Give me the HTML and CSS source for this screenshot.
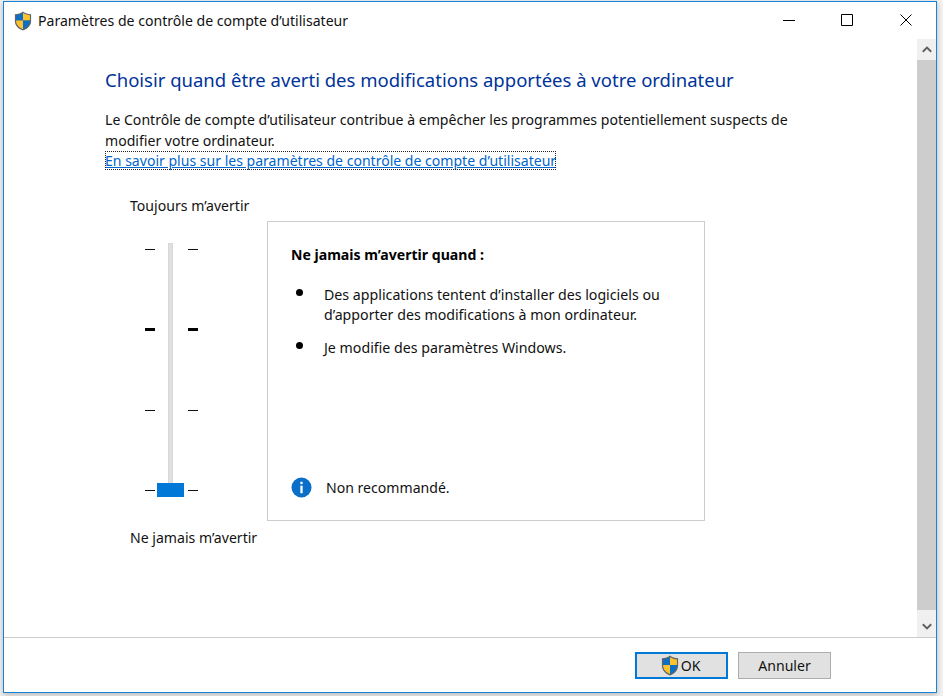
FILE: index.html
```html
<!DOCTYPE html>
<html lang="fr">
<head>
  <meta charset="UTF-8" />
  <title>Paramètres de contrôle de compte d’utilisateur</title>
  <link rel="stylesheet" href="styles.css">
</head>
<body>
  <svg class="defs" width="0" height="0">
    <symbol id="shield" viewBox="0 0 20 22" preserveAspectRatio="none">
      <path d="M10 .5C7.5 2.500 4.500 3.300 1 3.500V11c0 5 3.500 8.500 9 10.500 5.500-2 9-5.500 9-10.500V3.500C15.500 3.300 12.500 2.500 10 .5z" fill="#5f6468"/>
      <path d="M10 2v8.500H2.300V4.600C5.200 4.400 7.800 3.600 10 2z" fill="#0d6fc4"/>
      <path d="M10 2c2.200 1.600 4.800 2.400 7.700 2.600v5.900H10z" fill="#fcc32e"/>
      <path d="M2.300 10.500H10v9.500c-4.500-1.800-7.700-4.700-7.700-9.500z" fill="#fcc32e"/>
      <path d="M10 10.500h7.700c0 4.800-3.200 7.700-7.700 9.500z" fill="#0d6fc4"/>
    </symbol>
  </svg>

  <div class="window">
    <div class="titlebar">
      <svg class="title-icon"><use href="#shield"/></svg>
      <span class="title-text">Paramètres de contrôle de compte d’utilisateur</span>
      <div class="controls">
        <svg width="12" height="12" viewBox="0 0 12 12"><path d="M0 6.500h12" stroke="#000"/></svg>
        <svg width="12" height="12" viewBox="0 0 12 12"><path d="M.5.500h11v11H.5z" fill="none" stroke="#000"/></svg>
        <svg class="close" width="12" height="12" viewBox="0 0 12 12"><path d="M.5.500l11 11M11.500.500l-11 11" stroke="#000"/></svg>
      </div>
    </div>

    <div class="body-row">
      <div class="content">
        <h1>Choisir quand être averti des modifications apportées à votre ordinateur</h1>
        <p class="intro">Le Contrôle de compte d’utilisateur contribue à empêcher les programmes potentiellement suspects de modifier votre ordinateur.</p>
        <a class="more" href="#">En savoir plus sur les paramètres de contrôle de compte d’utilisateur</a>

        <div class="label-top">Toujours m’avertir</div>
        <div class="settings">
          <div class="slider">
            <div class="ticks">
              <i></i>
              <i class="thick"></i>
              <i></i>
              <i></i>
            </div>
            <div class="track"></div>
            <div class="ticks">
              <i></i>
              <i class="thick"></i>
              <i></i>
              <i></i>
            </div>
            <div class="thumb"></div>
          </div>
          <div class="box">
            <div class="box-title">Ne jamais m’avertir quand :</div>
            <ul>
              <li>Des applications tentent d’installer des logiciels ou d’apporter des modifications à mon ordinateur.</li>
              <li>Je modifie des paramètres Windows.</li>
            </ul>
            <div class="note">
              <svg width="21" height="21" viewBox="0 0 22 22">
                <circle cx="11" cy="11" r="10.500" fill="#0a6fc9"/>
                <rect x="9.800" y="9" width="2.400" height="8" fill="#fff"/>
                <rect x="9.800" y="5" width="2.400" height="2.400" fill="#fff"/>
              </svg>
              <span>Non recommandé.</span>
            </div>
          </div>
        </div>
        <div class="label-bottom">Ne jamais m’avertir</div>
      </div>

      <div class="scrollbar">
        <div class="arrow">
          <svg width="10" height="7" viewBox="0 0 10 7"><path d="M.8 5.800L5 1.600l4.200 4.200" fill="none" stroke="#606060" stroke-width="2"/></svg>
        </div>
        <div class="scroll-thumb"></div>
        <div class="arrow arrow-down">
          <svg width="10" height="7" viewBox="0 0 10 7"><path d="M.8 1.200L5 5.400l4.200-4.200" fill="none" stroke="#606060" stroke-width="2"/></svg>
        </div>
      </div>
    </div>

    <div class="footer">
      <button class="btn primary"><svg class="btn-icon"><use href="#shield"/></svg>OK</button>
      <button class="btn">Annuler</button>
    </div>
  </div>
</body>
</html>
```

FILE: styles.css
```css
html, body {
  margin: 0;
  height: 100%;
}
body {
  font-family: 'Noto Sans', sans-serif;
  font-size: 14.08px;
  color: #111;
  background: #f2f2f2;
  padding: 1px 0 0 3px;
  box-sizing: border-box;
  overflow: hidden;
}
.defs {
  position: absolute;
}
.window {
  width: 934px;
  height: 692px;
  box-sizing: border-box;
  border: 1px solid #1783d8;
  background: #fff;
  box-shadow: 0 2px 6px rgba(0, 0, 0, 0.25);
  display: flex;
  flex-direction: column;
}
.titlebar {
  height: 37px;
  flex: none;
  display: flex;
  align-items: center;
  padding-left: 10px;
}
.title-icon {
  width: 18px;
  height: 20px;
  margin-right: 6px;
}
.controls {
  margin-left: auto;
  margin-top: -1px;
  display: flex;
  align-items: center;
  gap: 46px;
  padding-right: 24px;
}
.close {
  margin-left: 1px;
}
.body-row {
  flex: 1;
  display: flex;
  min-height: 0;
}
.content {
  flex: 1;
  padding-left: 101px;
}
h1 {
  margin: 29px 0 0;
  font-size: 18.5px;
  font-weight: 400;
  line-height: 24px;
  color: #003399;
}
.intro {
  margin: 17px 0 0;
  width: 700px;
  line-height: 21px;
}
.more {
  display: inline-block;
  font-size: 14.05px;
  color: #0066cc;
  line-height: 19px;
  outline: 1px dotted #222;
  outline-offset: -1px;
  text-decoration: underline;
}
.label-top {
  margin: 26px 0 0 25px;
  line-height: 20px;
}
.settings {
  display: flex;
  margin: 5px 0 0 0;
}
.slider {
  position: relative;
  width: 162px;
  display: flex;
  align-items: flex-start;
  padding: 28px 0 0 40px;
  box-sizing: border-box;
}
.ticks {
  height: 242px;
  width: 10px;
  display: flex;
  flex-direction: column;
  justify-content: space-between;
}
.ticks i {
  display: block;
  height: 1px;
  background: #111;
}
.ticks .thick {
  height: 3px;
  margin: -1px 0 1px;
  background: #000;
}
.track {
  width: 5px;
  height: 254px;
  margin: -6px 15px 0 13px;
  background: #e0e0e0;
  border: 1px solid #d8d8d8;
  box-sizing: border-box;
}
.thumb {
  position: absolute;
  left: 52px;
  top: 262px;
  width: 27px;
  height: 14px;
  background: #0078d7;
}
.box {
  width: 438px;
  height: 300px;
  box-sizing: border-box;
  border: 1px solid #ccc;
  padding: 22px 23px 0;
  display: flex;
  flex-direction: column;
}
.box-title {
  font-weight: 700;
  color: #000;
  line-height: 22px;
}
ul {
  list-style: none;
  margin: 19px 0 0;
  padding: 0 0 0 33px;
  font-size: 14.2px;
}
li {
  position: relative;
  line-height: 20px;
  margin-bottom: 13px;
}
li::before {
  content: "";
  position: absolute;
  left: -28px;
  top: 4px;
  width: 7px;
  height: 7px;
  border-radius: 50%;
  background: #000;
}
.note {
  margin-top: auto;
  margin-bottom: 22px;
  display: flex;
  align-items: center;
  gap: 14px;
}
.label-bottom {
  margin: 7px 0 0 25px;
  line-height: 20px;
}
.scrollbar {
  width: 19px;
  flex: none;
  background: #f0f0f0;
  display: flex;
  flex-direction: column;
  align-self: stretch;
}
.arrow {
  height: 21px;
  flex: none;
  display: flex;
  align-items: center;
  justify-content: center;
}
.arrow-down {
  height: 27px;
  padding-top: 5px;
  box-sizing: border-box;
}
.scroll-thumb {
  flex: 1;
  background: #cdcdcd;
}
.footer {
  flex: none;
  height: 55px;
  border-top: 1px solid #ccc;
  display: flex;
  justify-content: flex-end;
  align-items: center;
  gap: 10px;
  padding-right: 105px;
  box-sizing: border-box;
}
.btn {
  width: 93px;
  height: 27px;
  box-sizing: border-box;
  border: 1px solid #adadad;
  background: #e1e1e1;
  font-family: inherit;
  font-size: 14.08px;
  color: #111;
  padding: 0;
  display: flex;
  align-items: center;
  justify-content: center;
}
.btn.primary {
  border: 2px solid #0078d7;
  padding-right: 2px;
}
.btn-icon {
  width: 18px;
  height: 21px;
  margin-right: 2px;
}
```
